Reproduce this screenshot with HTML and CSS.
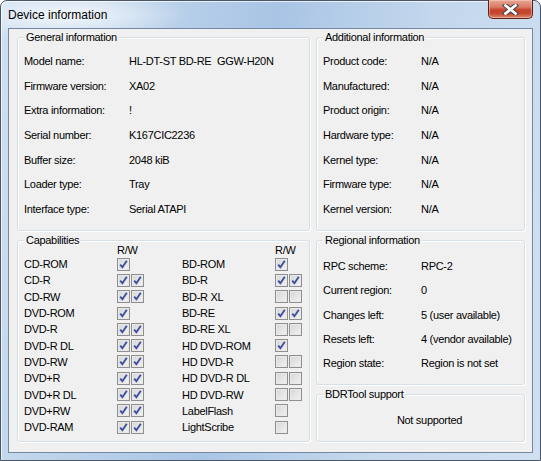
FILE: index.html
```html
<!DOCTYPE html>
<html lang="en">
<head>
    <meta charset="UTF-8">
    <title>Device information</title>
    <link rel="stylesheet" href="styles.css">
</head>
<body>
    <div class="window">
        <div class="titlebar">
            <span class="title">Device information</span>
            <button class="close" title="Close">
                <svg width="17" height="11" viewBox="0 0 17 11">
                    <path d="M3.5 1.5 L13.5 9.5 M13.5 1.5 L3.5 9.5" stroke="#3f3f3f" stroke-width="4.8" stroke-linecap="square"/>
                    <path d="M3.5 1.5 L13.5 9.5 M13.5 1.5 L3.5 9.5" stroke="#ffffff" stroke-width="2.8" stroke-linecap="square"/>
                </svg>
            </button>
        </div>

        <div class="client">
            <!-- General information -->
            <div class="group info-group">
                <span class="legend">General information</span>
                <div class="info-list general">
                    <span>Model name:</span><span>HL-DT-ST BD-RE&nbsp; GGW-H20N</span>
                    <span>Firmware version:</span><span>XA02</span>
                    <span>Extra information:</span><span>!</span>
                    <span>Serial number:</span><span>K167CIC2236</span>
                    <span>Buffer size:</span><span>2048 kiB</span>
                    <span>Loader type:</span><span>Tray</span>
                    <span>Interface type:</span><span>Serial ATAPI</span>
                </div>
            </div>

            <!-- Additional information -->
            <div class="group info-group">
                <span class="legend">Additional information</span>
                <div class="info-list additional">
                    <span>Product code:</span><span>N/A</span>
                    <span>Manufactured:</span><span>N/A</span>
                    <span>Product origin:</span><span>N/A</span>
                    <span>Hardware type:</span><span>N/A</span>
                    <span>Kernel type:</span><span>N/A</span>
                    <span>Firmware type:</span><span>N/A</span>
                    <span>Kernel version:</span><span>N/A</span>
                </div>
            </div>

            <!-- Capabilities -->
            <div class="group caps-group">
                <span class="legend">Capabilities</span>
                <div class="caps" id="caps">
                    <span></span><span class="rw">R/W</span><span></span><span class="rw">R/W</span>
                </div>
            </div>

            <div class="right-col">
                <!-- Regional information -->
                <div class="group region-group">
                    <span class="legend">Regional information</span>
                    <div class="info-list regional">
                        <span>RPC scheme:</span><span>RPC-2</span>
                        <span>Current region:</span><span>0</span>
                        <span>Changes left:</span><span>5 (user available)</span>
                        <span>Resets left:</span><span>4 (vendor available)</span>
                        <span>Region state:</span><span>Region is not set</span>
                    </div>
                </div>

                <!-- BDRTool support -->
                <div class="group bdr-group">
                    <span class="legend">BDRTool support</span>
                    <div class="bdr-text">Not supported</div>
                </div>
            </div>
        </div>
    </div>

    <script>
        // name, read, write  (null = no box shown)
        let left = [
            ['CD-ROM', 1, null], ['CD-R', 1, 1], ['CD-RW', 1, 1], ['DVD-ROM', 1, null],
            ['DVD-R', 1, 1], ['DVD-R DL', 1, 1], ['DVD-RW', 1, 1], ['DVD+R', 1, 1],
            ['DVD+R DL', 1, 1], ['DVD+RW', 1, 1], ['DVD-RAM', 1, 1]
        ];
        let right = [
            ['BD-ROM', 1, null], ['BD-R', 1, 1], ['BD-R XL', 0, 0], ['BD-RE', 1, 1],
            ['BD-RE XL', 0, 0], ['HD DVD-ROM', 1, null], ['HD DVD-R', 0, 0], ['HD DVD-R DL', 0, 0],
            ['HD DVD-RW', 0, 0], ['LabelFlash', 0, null], ['LightScribe', 0, null]
        ];
        let tick = '<svg width="11" height="11" viewBox="0 0 11 11"><path d="M2.2 5.6 L4.4 8.2 L8.8 1.8" fill="none" stroke="#3e4f9e" stroke-width="1.9"/></svg>';

        function box(on) {
            return `<span class="cb">${on ? tick : ''}</span>`;
        }

        function cell(item) {
            let html = `<span class="cap-name">${item[0]}</span><span class="boxes">${box(item[1])}`;
            if (item[2] !== null) html += box(item[2]);
            return html + '</span>';
        }

        let caps = document.getElementById('caps');
        for (let i = 0; i < left.length; i++) {
            caps.innerHTML += cell(left[i]) + cell(right[i]);
        }
    </script>
</body>
</html>
```

FILE: styles.css
```css
* {
    box-sizing: border-box;
}
body {
    margin: 0;
    width: 541px;
    height: 461px;
    overflow: hidden;
    font-family: "Liberation Sans", Arial, sans-serif;
    font-size: 11px;
    letter-spacing: -0.3px;
    color: #000;
    background: #fff;
}
.window {
    width: 541px;
    height: 461px;
    display: flex;
    flex-direction: column;
    padding: 0 7px 7px 7px;
    border: 1px solid #4a5566;
    border-radius: 7px 7px 0 0;
    background:
        radial-gradient(ellipse 120px 26px at 70px 14px, rgba(255, 255, 255, 0.8), rgba(255, 255, 255, 0) 100%),
        linear-gradient(100deg, #cfe0f1 0%, #bad1ea 25%, #a9c5e5 45%, #c3d7ed 70%, #d0e0f1 100%);
    box-shadow: inset 1px 1px 0 rgba(255, 255, 255, 0.7);
}
.titlebar {
    height: 27px;
    display: flex;
    justify-content: space-between;
    align-items: flex-start;
    flex-shrink: 0;
}
.title {
    font-size: 12px;
    letter-spacing: 0;
    margin-top: 7px;
    color: #000;
}
.close {
    width: 45px;
    height: 19px;
    margin-top: -1px;
    padding: 0;
    border: 1px solid #5a2118;
    border-top: none;
    border-radius: 0 0 5px 5px;
    background: linear-gradient(#e7a996 0%, #d97964 40%, #c5432b 55%, #c4492f 75%, #dc8a70 100%);
    box-shadow: inset 0 0 0 1px rgba(255, 220, 210, 0.45);
    display: flex;
    justify-content: center;
    align-items: center;
}
.client {
    flex: 1;
    border: 1px solid #7688a0;
    background: #f0f0f0;
    padding: 8px 7px 10px 8px;
    display: grid;
    grid-template-columns: 293px 1fr;
    grid-template-rows: 194px 1fr;
    column-gap: 6px;
    row-gap: 9px;
}
.group {
    position: relative;
    border: 1px solid #d5dfe5;
    border-radius: 3px;
    box-shadow: inset 1px 1px 0 #fff, 1px 1px 0 #fff;
}
.legend {
    position: absolute;
    left: 6px;
    top: -7px;
    line-height: 12px;
    padding: 0 2px;
    background: #f0f0f0;
}
.info-list {
    display: grid;
    padding-left: 6px;
    align-items: center;
}
.general {
    grid-template-columns: 105px 1fr;
    grid-auto-rows: 24.67px;
    padding-top: 10.6px;
}
.additional {
    grid-template-columns: 98px 1fr;
    grid-auto-rows: 24.67px;
    padding-top: 10.6px;
}
.regional {
    grid-template-columns: 98px 1fr;
    grid-auto-rows: 24.3px;
    padding-top: 12.8px;
}
.right-col {
    display: flex;
    flex-direction: column;
    gap: 9px;
}
.region-group {
    height: 145px;
}
.bdr-group {
    flex: 1;
}
.bdr-text {
    text-align: center;
    padding-top: 19px;
    padding-left: 18px;
}
.caps {
    display: grid;
    grid-template-columns: 93px 65px 93px 28px;
    grid-template-rows: 11px;
    grid-auto-rows: 16.3px;
    padding-top: 4px;
    padding-left: 6px;
    align-items: center;
}
.rw {
    line-height: 11px;
}
.boxes {
    display: flex;
    gap: 1px;
}
.cb {
    width: 13px;
    height: 13px;
    border: 1px solid #8f8f8f;
    background: linear-gradient(135deg, #d6d6d6, #f2f2f2);
    box-shadow: inset 0 0 0 1px #e9e9e9;
    display: flex;
}
.cb svg {
    display: block;
}
```
